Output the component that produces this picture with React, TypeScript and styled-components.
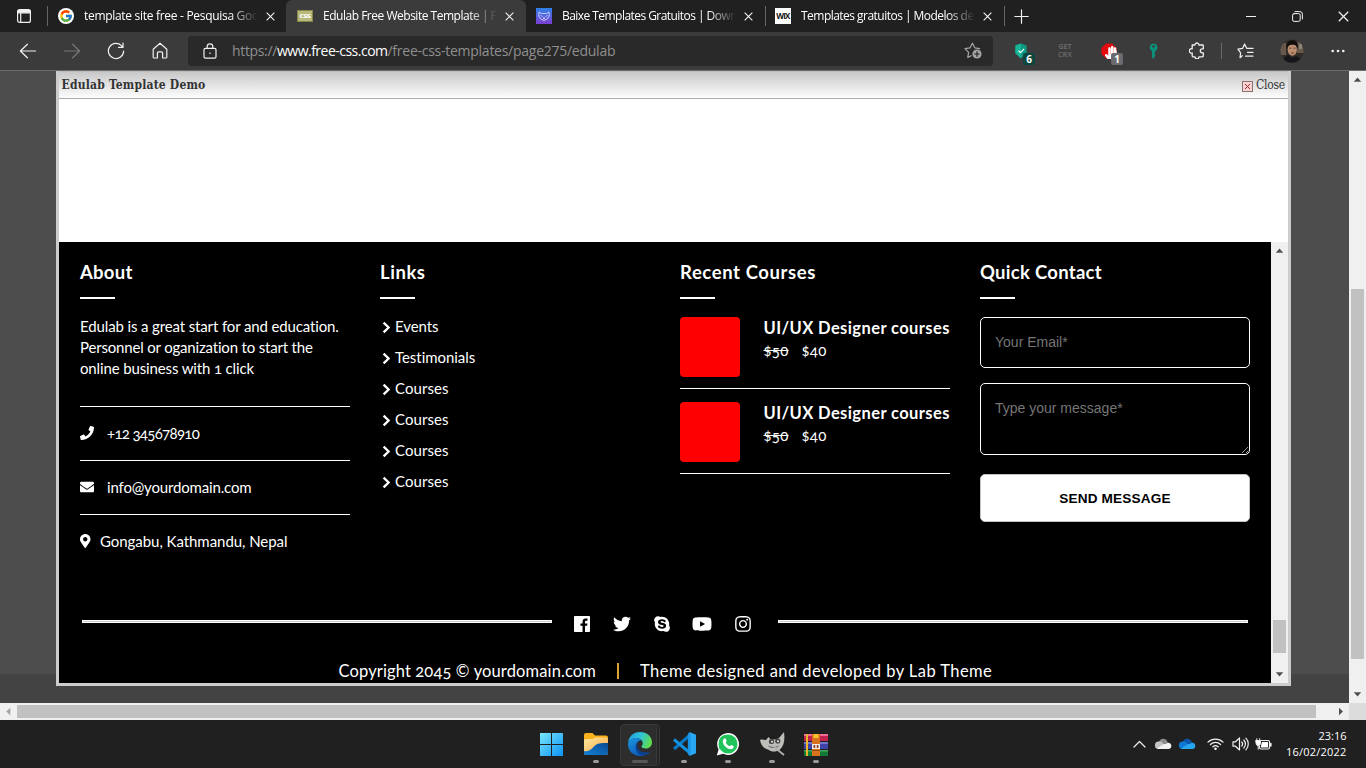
import React from 'react';
import styled, { createGlobalStyle } from 'styled-components';
import {
  FaPhone, FaEnvelope, FaMapMarkerAlt, FaTwitter, FaSkype,
  FaYoutube, FaInstagram, FaHandPaper, FaWhatsapp,
} from 'react-icons/fa';
import { FcGoogle } from 'react-icons/fc';

const GlobalStyle = createGlobalStyle`
  * { box-sizing: border-box; }
  body { margin: 0; background: #4d4d4d; overflow: hidden; }
`;

const ui = '"Open Sans", "Noto Sans", sans-serif';
const site = 'Lato, sans-serif';

/* ---------- shared ---------- */

const Desktop = styled.div`
  width: 1366px;
  height: 768px;
  display: flex;
  flex-direction: column;
  overflow: hidden;
  font-family: ${ui};
`;

const Text = styled.span<{ $ls?: number }>`
  letter-spacing: ${p => p.$ls ?? 0}px;
  white-space: pre;
`;

/* ---------- tab strip ---------- */

const TabStrip = styled.div`
  height: 32px;
  flex: none;
  display: flex;
  background: #202020;
  color: #fff;
`;

const TabActions = styled.div`
  width: 47px;
  display: grid;
  place-items: center;
`;

const Tab = styled.div<{ $active?: boolean; $w: number; $sep?: boolean; $pad?: number }>`
  width: ${p => p.$w}px;
  display: flex;
  align-items: center;
  padding-left: ${p => p.$pad ?? 10}px;
  position: relative;
  background: ${p => (p.$active ? '#3b3b3b' : 'transparent')};
  border-radius: ${p => (p.$active ? '6px 6px 0 0' : '0')};
  &::before {
    content: '';
    display: ${p => (p.$sep ? 'block' : 'none')};
    position: absolute;
    left: 0;
    top: 6px;
    width: 1px;
    height: 20px;
    background: #666;
  }
`;

const Favicon = styled.div`
  width: 16px;
  height: 16px;
  flex: none;
  display: grid;
  place-items: center;
`;

const GoogleDisc = styled(Favicon)`
  border-radius: 50%;
  background: #fff;
`;

const CssFavicon = styled(Favicon)`
  height: 12px;
  background: #b9b97c;
  border: 1px solid #85854c;
  color: #fff;
  font: bold 7px/8px "DejaVu Sans", sans-serif;
  letter-spacing: -0.5px;
`;

const WixFavicon = styled(Favicon)`
  background: #fff;
  color: #111;
  font: bold 8px/16px "Open Sans", sans-serif;
  letter-spacing: -0.8px;
`;

const TabTitle = styled.div`
  width: 174px;
  margin-left: 10px;
  overflow: hidden;
  font-size: 12px;
  line-height: 16px;
  mask-image: linear-gradient(90deg, #000 84%, transparent 100%);
`;

const TabClose = styled.div`
  width: 9px;
  height: 9px;
  margin-left: 8px;
  display: flex;
`;

const NewTab = styled.div`
  position: relative;
  width: 35px;
  display: grid;
  place-items: center;
  &::before {
    content: '';
    position: absolute;
    left: 0;
    top: 6px;
    width: 1px;
    height: 20px;
    background: #666;
  }
`;

const WindowButtons = styled.div`
  margin-left: auto;
  display: flex;
  > span { width: 46px; display: grid; place-items: center; }
`;

/* ---------- toolbar ---------- */

const Toolbar = styled.div`
  height: 39px;
  flex: none;
  display: flex;
  align-items: center;
  padding: 0 6px 1px;
  background: #3b3b3b;
  border-bottom: 1px solid #6d6d6d;
`;

const Cell = styled.div<{ $w?: number }>`
  width: ${p => p.$w ?? 44}px;
  height: 30px;
  flex: none;
  display: grid;
  place-items: center;
`;

const AddressBar = styled.div`
  width: 805px;
  height: 30px;
  margin: 0 6px;
  padding: 0 11px 0 15px;
  display: flex;
  align-items: center;
  border-radius: 4px;
  background: #292929;
  color: #8f8f8f;
  font-size: 14px;
  line-height: 20px;
`;

const Url = styled.div`
  flex: 1;
  display: flex;
  margin-left: 15px;
  b { font-weight: 400; color: #fff; }
`;

const Extension = styled.div`
  position: relative;
  display: grid;
  place-items: center;
`;

const Badge = styled.span<{ $bg: string; $left: number }>`
  position: absolute;
  left: ${p => p.$left}px;
  top: 10px;
  width: 12px;
  height: 12px;
  border-radius: 2px;
  background: ${p => p.$bg};
  color: #fff;
  font: bold 10px/12px "Open Sans", sans-serif;
  text-align: center;
`;

const GetCrx = styled.div`
  color: #666;
  font: bold 7px/8px "Open Sans", sans-serif;
  text-align: center;
`;

const Divider = styled.div`
  width: 1px;
  height: 16px;
  margin: 0 2px;
  background: #6a6a6a;
`;

/* ---------- page ---------- */

const Viewport = styled.div`
  height: 632px;
  flex: none;
  display: flex;
`;

const Page = styled.div`
  width: 1349px;
  padding-left: 56px;
  background: linear-gradient(#4d4d4d 603px, #434343 603px);
`;

const Frame = styled.div`
  width: 1235px;
  height: 615px;
  display: flex;
  flex-direction: column;
  border: 3px solid #ccc;
  border-top: 0;
  background: #fff;
`;

const DemoBar = styled.div`
  height: 28px;
  flex: none;
  display: flex;
  justify-content: space-between;
  align-items: center;
  padding: 0 3px 0 2.5px;
  border-top: 1px solid #bdbdbd;
  border-bottom: 1px solid #aaa;
  background: linear-gradient(#c8c8c8, #fdfdfd);
  color: #333;
  font: 12px/24px "DejaVu Serif Condensed", "DejaVu Serif", serif;
  strong { font-weight: bold; }
`;

const CloseLink = styled.div`
  display: flex;
  align-items: center;
  gap: 3px;
  svg { margin-top: 3px; }
`;

const Blank = styled.div`
  height: 143px;
  flex: none;
`;

const SiteRow = styled.div`
  flex: 1;
  min-height: 0;
  display: flex;
`;

const Footer = styled.footer`
  width: 1212px;
  padding: 19px 21px 0;
  overflow: hidden;
  background: #000;
  color: #fff;
  font: 15px/21px ${site};
  font-variant-numeric: oldstyle-nums;
`;

const Columns = styled.div`
  display: grid;
  grid-template-columns: repeat(4, 270px);
  column-gap: 30px;
  height: 354px;
`;

const Heading = styled.h3`
  margin: 0 0 17px;
  font-size: 18.5px;
  line-height: 22px;
  font-weight: 700;
  &::after {
    content: '';
    display: block;
    width: 35px;
    height: 2px;
    margin-top: 14px;
    background: #fff;
  }
`;

const Block = styled.div`
  padding-top: 1px;
`;

const About = styled.div`
  height: 90px;
  display: flex;
  flex-direction: column;
`;

const ContactRow = styled.div<{ $gap: number }>`
  height: 54px;
  display: flex;
  align-items: center;
  gap: ${p => p.$gap}px;
  padding-bottom: 1px;
  border-top: 1px solid #fff;
`;

const LinkItem = styled.div`
  height: 31px;
  display: flex;
  padding-left: 2px;
  gap: 4px;
  svg { margin-top: 5px; }
`;

const Course = styled.div`
  display: flex;
  gap: 23.5px;
  height: 72px;
  margin-bottom: 13px;
  border-bottom: 1px solid #fff;
`;

const Thumb = styled.div`
  width: 60px;
  height: 60px;
  flex: none;
  border-radius: 4px;
  background: #f00;
`;

const CourseName = styled.div`
  font-size: 16.5px;
  line-height: 23px;
  font-weight: 700;
`;

const Price = styled.div`
  display: flex;
  gap: 13px;
  line-height: 20px;
`;

const Field = styled.input`
  display: block;
  width: 270px;
  height: 51px;
  margin-bottom: 15px;
  padding: 0 14px 2px;
  border: 1px solid #fff;
  border-radius: 5px;
  background: transparent;
  font: 14px "Liberation Sans", Arial, sans-serif;
  &::placeholder { color: #757575; }
`;

const Area = styled.textarea`
  display: block;
  width: 270px;
  height: 72px;
  margin-bottom: 19px;
  padding: 16px 14px;
  border: 1px solid #fff;
  border-radius: 5px;
  background: transparent;
  font: 14px/16px "Liberation Sans", Arial, sans-serif;
  overflow: hidden;
  &::placeholder { color: #757575; }
`;

const Send = styled.button`
  display: block;
  width: 270px;
  height: 48px;
  padding: 0;
  border: 1px solid #c4c4c4;
  border-radius: 5px;
  background: #fff;
  color: #000;
  font: bold 13.6px "Liberation Sans", Arial, sans-serif;
  letter-spacing: 0.15px;
`;

const SocialRow = styled.div`
  display: flex;
  align-items: center;
  justify-content: space-between;
  height: 18px;
  padding: 0 2px;
`;

const Rule = styled.div`
  width: 470px;
  height: 3px;
  margin-top: -5px;
  border: 1px solid #fff;
  background: #ccc;
`;

const Socials = styled.div`
  display: flex;
  align-items: center;
  gap: 22.6px;
  padding-right: 5px;
`;

const Copyright = styled.div`
  display: flex;
  align-items: center;
  height: 24px;
  margin-top: 26px;
  padding-left: 258.5px;
  font-size: 16.5px;
  line-height: 24px;
`;

const Bar = styled.div`
  width: 2px;
  height: 16px;
  margin: 0 21px;
  background: #dda22a;
`;

/* ---------- scrollbars ---------- */

const VScroll = styled.div`
  width: 17px;
  flex: none;
  display: flex;
  flex-direction: column;
  align-items: center;
  background: #f0f0f0;
`;

const VThumb = styled.div<{ $top: number; $h: number }>`
  width: 13px;
  height: ${p => p.$h}px;
  margin-top: ${p => p.$top}px;
  margin-bottom: auto;
  background: #c1c1c1;
`;

const ArrowBox = styled.div`
  width: 17px;
  height: 17px;
  flex: none;
  display: grid;
  place-items: center;
`;

const HScroll = styled.div`
  height: 17px;
  flex: none;
  display: flex;
  align-items: center;
  background: #f0f0f0;
`;

const HThumb = styled.div`
  width: 1299px;
  height: 13px;
  margin-right: 16px;
  background: #c1c1c1;
`;

const Corner = styled.div`
  width: 17px;
  height: 17px;
  background: #dcdcdc;
`;

/* ---------- taskbar ---------- */

const Taskbar = styled.div`
  height: 48px;
  flex: none;
  display: flex;
  padding-left: 530px;
  background: #202020;
  color: #fff;
`;

const TaskButton = styled.div`
  position: relative;
  width: 44px;
  height: 48px;
  display: grid;
  place-items: center;
`;

const ActiveTaskButton = styled(TaskButton)`
  &::before, &::after {
    content: '';
    position: absolute;
    top: 4px;
    height: 40px;
    border: 1px solid #383838;
    border-radius: 4px;
    background: #2d2d2d;
  }
  &::before { left: 10px; width: 30px; background: #262626; }
  &::after { left: 2px; width: 35px; z-index: 0; }
  svg { z-index: 1; }
`;

const Pill = styled.span<{ $w?: number }>`
  position: absolute;
  z-index: 2;
  bottom: 5px;
  left: ${p => 22 - (p.$w ?? 6) / 2}px;
  width: ${p => p.$w ?? 6}px;
  height: 3px;
  border-radius: 2px;
  background: ${p => (p.$w ? '#585858' : '#9a9a9a')};
`;

const Tray = styled.div`
  margin-left: auto;
  display: flex;
  align-items: center;
`;

const TrayIcon = styled.span<{ $w: number }>`
  width: ${p => p.$w}px;
  display: grid;
  place-items: center;
`;

const Clock = styled.div`
  width: 67px;
  margin-right: 19.5px;
  display: flex;
  flex-direction: column;
  align-items: flex-end;
  font-size: 11px;
  line-height: 16px;
`;

/* ---------- icons ---------- */

const Cross = ({ size = 9, w = 1.2 }: { size?: number; w?: number }) => (
  <svg width={size} height={size} viewBox="0 0 10 10" stroke="#f2f2f2" strokeWidth={w} fill="none">
    <path d="M.7.7l8.6 8.6M9.3.7L.7 9.3" />
  </svg>
);

const line = { fill: 'none', stroke: '#f0f0f0', strokeWidth: 1.2, strokeLinecap: 'round' as const, strokeLinejoin: 'round' as const };

const TabMenuIcon = () => (
  <svg width="14" height="14" viewBox="0 0 14 14" {...line}>
    <rect x=".6" y=".6" width="12.8" height="12.8" rx="2" />
    <path d="M1 1.5h12v2.3H1z" fill="#f0f0f0" />
    <path d="M3.7 4v9" />
  </svg>
);

const BackIcon = () => (
  <svg width="18" height="16" viewBox="0 0 18 16" {...line}>
    <path d="M16.6 8H1.6M8.4 1.2L1.4 8l7 6.8" />
  </svg>
);

const ForwardIcon = () => (
  <svg width="18" height="16" viewBox="0 0 18 16" {...line} stroke="#777">
    <path d="M1.4 8h15M9.6 1.2l7 6.8-7 6.8" />
  </svg>
);

const ReloadIcon = () => (
  <svg width="18" height="18" viewBox="0 0 18 18" {...line}>
    <path d="M16.6 9A7.6 7.6 0 1 1 14.4 3.6L16 5.2M16 1v4.4h-4.4" />
  </svg>
);

const HomeIcon = () => (
  <svg width="16" height="17" viewBox="0 0 16 17" {...line}>
    <path d="M1.2 7.2L8 1.2l6.8 6v8a.8.8 0 0 1-.8.8h-3.4v-5.2a1 1 0 0 0-1-1H6.4a1 1 0 0 0-1 1V16H2a.8.8 0 0 1-.8-.8z" />
  </svg>
);

const LockIcon = () => (
  <svg width="14" height="16" viewBox="0 0 14 16" {...line}>
    <rect x="1" y="5.4" width="12" height="9.8" rx="1.4" />
    <path d="M4.2 5.2V3.6a2.8 2.8 0 0 1 5.6 0v1.6" />
    <circle cx="7" cy="10.3" r=".8" fill="#f0f0f0" stroke="none" />
  </svg>
);

const StarAddIcon = () => (
  <svg width="18" height="17" viewBox="0 0 18 17" {...line} stroke="#a5a5a5">
    <path d="M15.6 6.6l-4.8-.8L8.4 1.2 6 5.8 1 6.6l3.6 3.7-.8 5.1 3.4-1.7" />
    <circle cx="13" cy="12" r="4.6" fill="#a5a5a5" stroke="none" />
    <path d="M13 9.7v4.6M10.7 12h4.6" stroke="#292929" />
  </svg>
);

const ShieldIcon = () => (
  <svg width="12" height="16" viewBox="0 0 12 16">
    <path d="M6 .4l5.6 2.2v7.6L6 15.4.4 10.2V2.6z" fill="#0b9b83" />
    <path d="M6 .4v15L.4 10.2V2.6z" fill="#18b497" />
    <path d="M3.5 7.6l2 2 3.6-3.8" fill="none" stroke="#fff" strokeWidth="1.2" />
  </svg>
);

const StopIcon = () => (
  <svg width="16" height="16" viewBox="0 0 16 16">
    <path d="M5 .4h6L15.6 5v6L11 15.6H5L.4 11V5z" fill="#e4090f" />
    <FaHandPaper x="3" y="3" width="10" height="10" color="#fff" />
  </svg>
);

const KeyIcon = () => (
  <svg width="9" height="16" viewBox="0 0 9 16">
    <path fillRule="evenodd" fill="#0b9079" d="M4.5.5a4 4 0 0 1 1.7 7.6v1.3l-1 .9 1 .9v1.2l-1 .9.6.8-1.5 1.6L3 14.4V8.100A4 4 0 0 1 4.500.5zM4.500 2.200a1.300 1.300 0 1 0 0 2.600 1.300 1.300 0 0 0 0-2.600z" />
  </svg>
);

const PuzzleIcon = () => (
  <svg width="16" height="17" viewBox="0 0 16 17" {...line} strokeWidth={1.3}>
    <path d="M3.200 3h2.700a2 2 0 1 1 4 0h3.600a.8.8 0 0 1 .8.8v3h-1a2 2 0 1 0 0 4h1v3.200a.8.8 0 0 1-.8.8H10a2 2 0 1 1-4 0H4a.8.8 0 0 1-.8-.8v-3a2.200 2.200 0 1 1 0-4.200V3z" />
  </svg>
);

const FavoritesIcon = () => (
  <svg width="17" height="16" viewBox="0 0 17 16" {...line}>
    <path d="M5.200 12.700L3 14.700l.6-4.800L.9 6.200l4.600-.8L7.600 1l2.200 4.400H16M10.600 9.400H16M8.600 13.200H16" />
  </svg>
);

const Avatar = () => (
  <svg width="24" height="24" viewBox="0 0 24 24">
    <defs><clipPath id="avatar"><circle cx="12" cy="12" r="11.600" /></clipPath></defs>
    <g clipPath="url(#avatar)">
      <path fill="#332c27" d="M0 0h24v24H0z" />
      <path fill="#66584b" d="M0 4h6v12H0zM17 3h7v11h-7z" />
      <path fill="#8c8478" d="M19 5h3v5h-3z" />
      <ellipse cx="12.300" cy="10.500" rx="4.600" ry="6.200" fill="#bc8d70" />
      <path fill="#120e0c" d="M6.600 10C6 3.500 9 1.200 12.500 1.200S19 4 17.500 10c-.6-3-1.500-4.200-5-4.200S8 7 6.600 10z" />
      <path fill="#15161a" d="M3 24c0-5 3-8 6-8l3 3 4-2c3 1 5 3 5 7z" />
      <path stroke="#4a3227" strokeWidth=".8" d="M9.300 9.200h2M13.500 9.200h2M11 14h3" />
    </g>
  </svg>
);

const DemoCloseIcon = () => (
  <svg width="11" height="11" viewBox="0 0 11 11">
    <rect x=".5" y=".5" width="10" height="10" fill="#fbd3d3" stroke="#8d7070" />
    <path d="M3 3l5 5M8 3L3 8" stroke="#a52a2a" />
  </svg>
);

const Chevron = () => (
  <svg width="9" height="13" viewBox="0 0 9 13" fill="none" stroke="#fff" strokeWidth="2.300">
    <path d="M1.600 1.600l5 4.900-5 4.900" />
  </svg>
);

const FacebookIcon = () => (
  <svg width="16" height="16" viewBox="0 128 1536 1536" fill="#fff">
    <path d="M1451 128q35 0 60 25t25 60v1366q0 35-25 60t-60 25h-391v-595h199l30-232h-229v-148q0-56 23.500-84t91.500-28l122-1v-207q-63-9-178-9-136 0-217.500 80t-81.500 226v171h-200v232h200v595h-735q-35 0-60-25t-25-60v-1366q0-35 25-60t60-25h1366z" />
  </svg>
);

const Arrow = ({ dir, color = '#505050' }: { dir: 'up' | 'down' | 'left' | 'right'; color?: string }) => (
  <svg width="9" height="9" viewBox="0 0 9 9" fill={color}>
    {dir === 'up' && <path d="M.8 6.800L4.500 2.500l3.700 4.300z" />}
    {dir === 'down' && <path d="M.8 2.300h7.400L4.500 6.600z" />}
    {dir === 'left' && <path d="M6.300.8v7.400L2.300 4.500z" />}
    {dir === 'right' && <path d="M3 .8l4 3.700-4 3.700z" />}
  </svg>
);

const WindowsIcon = () => (
  <svg width="24" height="24" viewBox="0 0 24 24">
    <defs>
      <linearGradient id="win" x1="0" y1="0" x2="1" y2="1">
        <stop offset="0" stopColor="#7be6fd" /><stop offset="1" stopColor="#0a93f5" />
      </linearGradient>
    </defs>
    <path fill="url(#win)" d="M0 1h11v11H0zM12 1h11v11H12zM0 13h11v11H0zM12 13h11v11H12z" />
  </svg>
);

const ExplorerIcon = () => (
  <svg width="24" height="24" viewBox="0 0 24 24">
    <defs>
      <linearGradient id="fold" x1="0" y1="0" x2="1" y2="1">
        <stop offset="0" stopColor="#ffe7a0" /><stop offset="1" stopColor="#f9a640" />
      </linearGradient>
      <linearGradient id="foldb" x1="0" y1="1" x2="1" y2="0">
        <stop offset="0" stopColor="#1181d8" /><stop offset="1" stopColor="#0b4a92" />
      </linearGradient>
    </defs>
    <path fill="#f9b21c" d="M0 3a2 2 0 0 1 2-2h6.500L11 3.500h11a2 2 0 0 1 2 2V12H0z" />
    <path fill="url(#fold)" d="M0 8.500A2 2 0 0 1 2 7h7l2-1.500h11a2 2 0 0 1 2 2V21a2 2 0 0 1-2 2H2a2 2 0 0 1-2-2z" />
    <path fill="url(#foldb)" d="M0 19c5 1 7-1.500 10-4.500 3.500-3.500 6-3.500 14-3.500v10a2 2 0 0 1-2 2H2a2 2 0 0 1-2-2z" />
  </svg>
);

const EdgeIcon = () => (
  <svg width="24" height="24" viewBox="0 0 24 24">
    <defs>
      <linearGradient id="eg" x1="0" y1=".2" x2="1" y2=".5">
        <stop offset="0" stopColor="#1f9fe3" /><stop offset=".5" stopColor="#2fc4d8" /><stop offset="1" stopColor="#62dc48" />
      </linearGradient>
      <linearGradient id="eb" x1="0" y1="0" x2=".6" y2="1">
        <stop offset="0" stopColor="#1c95e0" /><stop offset="1" stopColor="#0b56b2" />
      </linearGradient>
    </defs>
    <path fill="url(#eg)" d="M0 11C.5 4.500 5.500 0 12 0c7 0 12 4.800 12 10.200 0 4-3 6.300-6.200 6.300-2.700 0-4.300-1-4.300-2 0-.8 1.200-1.200 1.200-3.500 0-2.400-2.500-5-6.200-5C4 6 1 8.500 0 11z" />
    <path fill="url(#eb)" d="M0 12C.5 8 4.500 6 8.500 6c2.500 0 4.700 1.200 5.600 2.700C11.500 8 8.500 9.800 8.500 13.500c0 4.500 4 7.500 8.500 7.500 2 0 3.800-.6 5-1.200C20 22.500 16.500 24 12.500 24 5 24-.2 18.500 0 12z" />
    <path fill="#0a4193" d="M9.500 10.200c-1 1-2 2.500-2 4.800 0 4 3 8 7 8.700 3.500-.5 6.200-2.200 7.800-4.500-4.500 2.300-10.300 1.500-12.300-2.700-1-2-.8-4.500-.5-6.300z" />
  </svg>
);

const CodeIcon = () => (
  <svg width="24" height="24" viewBox="0 0 24 24">
    <path fill="none" stroke="#0b79c6" strokeWidth="3" strokeLinejoin="round" d="M17.500 3.500L2 17" />
    <path fill="none" stroke="#1490df" strokeWidth="3" strokeLinejoin="round" d="M17.500 20.500L2 7.500" />
    <path fill="#29a7f2" d="M17.500 0L24 2.800v18.400L17.500 24z" />
    <path fill="#1a94e6" d="M17.500 0l1 6.500v11l-1 6.500-1.700-2V2z" />
  </svg>
);

const WhatsAppIcon = () => (
  <svg width="24" height="24" viewBox="0 0 24 24">
    <path fill="#fff" d="M12 1a11 11 0 1 1-5 20.800L.8 23.500l1.800-6A11 11 0 0 1 12 1z" />
    <circle cx="12" cy="12" r="9.500" fill="#20c45a" />
    <FaWhatsapp x="2" y="2" width="20" height="20" color="#20c45a" />
    <path fill="#fff" d="M8.200 6.500c.8-.5 1.400-.2 1.700.6l.7 1.700c.2.7-1 1.400-.8 1.800.8 1.700 2 2.800 3.800 3.600.5.200 1.200-1.300 1.800-1.100l2 1c.6.400.2 1.900-.6 2.500-1.600 1.100-4 .7-6.700-1.400C7 12.900 5.600 8.500 8.200 6.500z" />
  </svg>
);

const GimpIcon = () => (
  <svg width="25" height="24" viewBox="0 0 25 24">
    <path fill="#bdbdb9" d="M0 8c2-1 4 .3 6 0l2.500-3 2 2.300c3 .7 6.500 0 8.500-1.300L24 0c1 7 .3 14-4 17.500-4 3-9 2.500-12 0C5 17 1 14 0 8z" />
    <circle cx="11.500" cy="9.500" r="2.600" fill="#444" /><circle cx="17.800" cy="9" r="2.600" fill="#444" />
    <circle cx="12" cy="9.800" r="1" fill="#eee" /><circle cx="18" cy="9.300" r="1" fill="#eee" />
    <path d="M8.500 14c3 2 7 2 10 0" stroke="#555" fill="none" />
    <path d="M14 15l10 8" stroke="#b0b0ad" strokeWidth="1.800" />
  </svg>
);

const WinrarIcon = () => (
  <svg width="24" height="23" viewBox="0 0 24 23">
    <path fill="#c3224f" d="M0 1h24v7H0z" /><path fill="#ea6c90" d="M0 1h24v2H0z" />
    <path fill="#4042a6" d="M0 9h24v7H0z" /><path fill="#7476cc" d="M0 9h24v2H0z" />
    <path fill="#137a35" d="M0 17h24v6H0z" /><path fill="#3ea95a" d="M0 17h24v1.500H0z" />
    <path fill="#e8b52c" d="M2 1h2v22H2z" />
    <path fill="#d8721c" d="M8 1h8v22H8z" /><path fill="#f5c22b" d="M9.500 1h5v4h-5z" />
    <path fill="#eee" d="M8 11h8v5H8z" /><path fill="#9a4a14" d="M9.500 12h5v3h-5zM8 17h8v1H8z" /><path fill="#eee" d="M11.300 11h1.400v5h-1.400z" />
  </svg>
);

const Cloud = ({ top, mid, front }: { top: string; mid: string; front: string }) => (
  <svg width="17" height="12" viewBox="0 0 17 12">
    <path fill={top} d="M4 4a4.500 4.500 0 0 1 8.500-.6L13 8H4z" />
    <path fill={mid} d="M3.800 3.600A4 4 0 0 1 7 4.300L12 11H3.500A3.600 3.600 0 0 1 3.800 3.600z" />
    <path fill={front} d="M2 10.600l6.500-4.300c1-.6 2-.3 2.500-.2 1-1.500 2.500-1.700 3.500-1.200 2.600 1 2.600 6-1 6.200H4A3 3 0 0 1 2 10.600z" />
  </svg>
);

const WifiIcon = () => (
  <svg width="17" height="14" viewBox="0 0 17 14" {...line}>
    <path d="M1 5.200a10.500 10.500 0 0 1 15 0M3.400 7.500a7.200 7.200 0 0 1 10.200 0M5.800 9.800a4 4 0 0 1 5.400 0" />
    <circle cx="8.500" cy="11.800" r="1.300" fill="#fff" stroke="none" />
  </svg>
);

const VolumeIcon = () => (
  <svg width="17" height="14" viewBox="0 0 17 14" {...line}>
    <path d="M1 4.800h2.500L7.500 1v12L3.500 9.200H1zM9.800 5a3 3 0 0 1 0 4M11.800 3a5.800 5.800 0 0 1 0 8M13.900 1.200a8.300 8.300 0 0 1 0 11.600" />
  </svg>
);

const BatteryIcon = () => (
  <svg width="17" height="13" viewBox="0 0 17 13" {...line}>
    <path d="M6.500 2.500H13a1.500 1.500 0 0 1 1.500 1.500v5.500A1.500 1.500 0 0 1 13 11H6A1.500 1.500 0 0 1 4.500 9.500V8" />
    <path d="M7 4h6v5.500H6V7.500z" fill="#fff" stroke="none" />
    <path d="M15.800 5.500v2.500" strokeWidth="1.600" />
    <path d="M1 2.500h4.500v2.800a2.200 2.200 0 0 1-4.500 0zM1.800.7v1.500M4.700.7v1.500M3.200 7.500v3.700" fill="#fff" strokeWidth="1" />
  </svg>
);

/* ---------- composition ---------- */

const headings: Record<string, number> = { About: 0.25, Links: 0.55, 'Recent Courses': 0.6, 'Quick Contact': 0.28 };

const Title = ({ children }: { children: string }) => (
  <Heading><Text $ls={headings[children]}>{children}</Text></Heading>
);

const links: [string, number][] = [
  ['Events', -0.07], ['Testimonials', -0.04], ['Courses', 0.06],
  ['Courses', 0.06], ['Courses', 0.06], ['Courses', 0.06],
];

const CloseTab = () => <TabClose><Cross /></TabClose>;

export default function App() {
  return (
    <Desktop>
      <GlobalStyle />
      <TabStrip>
        <TabActions><TabMenuIcon /></TabActions>
        <Tab $w={239} $sep $pad={11}>
          <GoogleDisc><FcGoogle size={14} /></GoogleDisc>
          <TabTitle><Text $ls={-0.3}>template site free - Pesquisa Goo</Text></TabTitle>
          <CloseTab />
        </Tab>
        <Tab $w={240} $active $pad={11}>
          <CssFavicon>css</CssFavicon>
          <TabTitle><Text $ls={-0.483}>Edulab Free Website Template | F</Text></TabTitle>
          <CloseTab />
        </Tab>
        <Tab $w={239}>
          <Favicon>
            <svg width="16" height="16" viewBox="0 0 16 16">
              <defs><linearGradient id="fox" x1="0" y1="0" x2="0" y2="1"><stop offset="0" stopColor="#2f80e6" /><stop offset="1" stopColor="#7d3fd3" /></linearGradient></defs>
              <path fill="url(#fox)" d="M0 0h16v16H0z" />
              <path fill="none" stroke="#cfd8fb" strokeWidth=".9" strokeLinejoin="round" d="M3 4l2.500 1.500h5L13 4l.3 4-2 3a5 5 0 0 1-6.600 0l-2-3zM4.500 7.500l2 1M11.500 7.500l-2 1M7 10h2l-1 .8z" />
            </svg>
          </Favicon>
          <TabTitle><Text $ls={-0.549}>Baixe Templates Gratuitos | Down</Text></TabTitle>
          <CloseTab />
        </Tab>
        <Tab $w={239} $sep>
          <WixFavicon>WIX</WixFavicon>
          <TabTitle><Text $ls={-0.525}>Templates gratuitos | Modelos de</Text></TabTitle>
          <CloseTab />
        </Tab>
        <NewTab>
          <svg width="15" height="15" viewBox="0 0 15 15" {...line}><path d="M7.500.8v13.400M.8 7.500h13.400" /></svg>
        </NewTab>
        <WindowButtons>
          <span><svg width="10" height="10" viewBox="0 0 10 10" {...line}><path d="M.5 5.500h9" /></svg></span>
          <span>
            <svg width="11" height="11" viewBox="0 0 11 11" {...line} strokeWidth={1}>
              <rect x=".6" y="2.600" width="7.600" height="7.800" rx="1.500" /><path d="M3 .6h4.800a2.600 2.600 0 0 1 2.600 2.600V8" />
            </svg>
          </span>
          <span><Cross size={11} w={1.1} /></span>
        </WindowButtons>
      </TabStrip>

      <Toolbar>
        <Cell><BackIcon /></Cell>
        <Cell><ForwardIcon /></Cell>
        <Cell><ReloadIcon /></Cell>
        <Cell><HomeIcon /></Cell>
        <AddressBar>
          <LockIcon />
          <Url>
            <Text $ls={-0.344}>https://</Text>
            <b><Text $ls={-0.513}>www.free-css.com</Text></b>
            <Text $ls={-0.26}>/free-css-templates/page275/edulab</Text>
          </Url>
          <StarAddIcon />
        </AddressBar>
        <Cell><Extension><ShieldIcon /><Badge $bg="#0b473f" $left={8}>6</Badge></Extension></Cell>
        <Cell><GetCrx>GET<br />CRX</GetCrx></Cell>
        <Cell><Extension><StopIcon /><Badge $bg="#6b6b6f" $left={10}>1</Badge></Extension></Cell>
        <Cell><KeyIcon /></Cell>
        <Cell><PuzzleIcon /></Cell>
        <Divider />
        <Cell $w={43}><FavoritesIcon /></Cell>
        <Cell $w={49}><Avatar /></Cell>
        <Cell $w={43}>
          <svg width="14" height="4" viewBox="0 0 14 4" fill="#f0f0f0"><circle cx="1.700" cy="2" r="1.300" /><circle cx="7" cy="2" r="1.300" /><circle cx="12.300" cy="2" r="1.300" /></svg>
        </Cell>
      </Toolbar>

      <Viewport>
        <Page>
          <Frame>
            <DemoBar>
              <strong><Text $ls={0.195}>Edulab Template Demo</Text></strong>
              <CloseLink><DemoCloseIcon /><Text $ls={-0.228}>Close</Text></CloseLink>
            </DemoBar>
            <Blank />
            <SiteRow>
              <Footer>
                <Columns>
                  <div>
                    <Title>About</Title>
                    <About>
                      <Text $ls={-0.13}>Edulab is a great start for and education.</Text>
                      <Text $ls={-0.179}>Personnel or oganization to start the</Text>
                      <Text $ls={-0.136}>online business with 1 click</Text>
                    </About>
                    <ContactRow $gap={13}><FaPhone size={14} /><Text $ls={-0.68}>+12 345678910</Text></ContactRow>
                    <ContactRow $gap={13}><FaEnvelope size={14} /><Text $ls={-0.16}>info@yourdomain.com</Text></ContactRow>
                    <ContactRow $gap={9.5}><FaMapMarkerAlt width={10.5} style={{ width: 10.5, height: 14 }} /><Text $ls={-0.049}>Gongabu, Kathmandu, Nepal</Text></ContactRow>
                  </div>
                  <div>
                    <Title>Links</Title>
                    {links.map(([name, ls], i) => (
                      <LinkItem key={i}><Chevron /><Text $ls={ls}>{name}</Text></LinkItem>
                    ))}
                  </div>
                  <div>
                    <Title>Recent Courses</Title>
                    <Block>
                      {[0, 1].map(i => (
                        <Course key={i}>
                          <Thumb />
                          <div>
                            <CourseName><Text $ls={0.4}>UI/UX Designer courses</Text></CourseName>
                            <Price><s><Text $ls={0.229}>$50</Text></s><Text $ls={0.229}>$40</Text></Price>
                          </div>
                        </Course>
                      ))}
                    </Block>
                  </div>
                  <div>
                    <Title>Quick Contact</Title>
                    <Block>
                      <Field placeholder="Your Email*" />
                      <Area placeholder="Type your message*" />
                      <Send>SEND MESSAGE</Send>
                    </Block>
                  </div>
                </Columns>
                <SocialRow>
                  <Rule />
                  <Socials>
                    <FacebookIcon />
                    <FaTwitter size={18} />
                    <FaSkype size={18} viewBox="0 0 448 512" style={{ width: 16 }} />
                    <FaYoutube style={{ width: 20, height: 18 }} />
                    <FaInstagram size={18} style={{ width: 16 }} />
                  </Socials>
                  <Rule />
                </SocialRow>
                <Copyright>
                  <Text $ls={0.13}>Copyright 2045 © yourdomain.com</Text>
                  <Bar />
                  <Text $ls={0.44}>Theme designed and developed by Lab Theme</Text>
                </Copyright>
              </Footer>
              <VScroll>
                <ArrowBox><Arrow dir="up" /></ArrowBox>
                <VThumb $top={361} $h={33} />
                <ArrowBox><Arrow dir="down" /></ArrowBox>
              </VScroll>
            </SiteRow>
          </Frame>
        </Page>
        <VScroll>
          <ArrowBox><Arrow dir="up" /></ArrowBox>
          <VThumb $top={201} $h={370} />
          <ArrowBox><Arrow dir="down" /></ArrowBox>
        </VScroll>
      </Viewport>

      <HScroll>
        <ArrowBox><Arrow dir="left" color="#a3a3a3" /></ArrowBox>
        <HThumb />
        <ArrowBox><Arrow dir="right" /></ArrowBox>
        <Corner />
      </HScroll>

      <Taskbar>
        <TaskButton><WindowsIcon /></TaskButton>
        <TaskButton><ExplorerIcon /><Pill /></TaskButton>
        <ActiveTaskButton><EdgeIcon /><Pill $w={16} /></ActiveTaskButton>
        <TaskButton><CodeIcon /><Pill /></TaskButton>
        <TaskButton><WhatsAppIcon /><Pill /></TaskButton>
        <TaskButton><GimpIcon /><Pill /></TaskButton>
        <TaskButton><WinrarIcon /><Pill /></TaskButton>
        <Tray>
          <TrayIcon $w={24}><svg width="13" height="8" viewBox="0 0 13 8" {...line}><path d="M1 7l5.500-5.500L12 7" /></svg></TrayIcon>
          <TrayIcon $w={24}><Cloud top="#8e8e8e" mid="#c4c4c4" front="#f4f4f4" /></TrayIcon>
          <TrayIcon $w={24}><Cloud top="#0a56ad" mid="#0f77d4" front="#27a5ee" /></TrayIcon>
          <TrayIcon $w={32}><WifiIcon /></TrayIcon>
          <TrayIcon $w={16}><VolumeIcon /></TrayIcon>
          <TrayIcon $w={32}><BatteryIcon /></TrayIcon>
          <Clock><Text>23:16</Text><Text $ls={0.2}>16/02/2022</Text></Clock>
        </Tray>
      </Taskbar>
    </Desktop>
  );
}
